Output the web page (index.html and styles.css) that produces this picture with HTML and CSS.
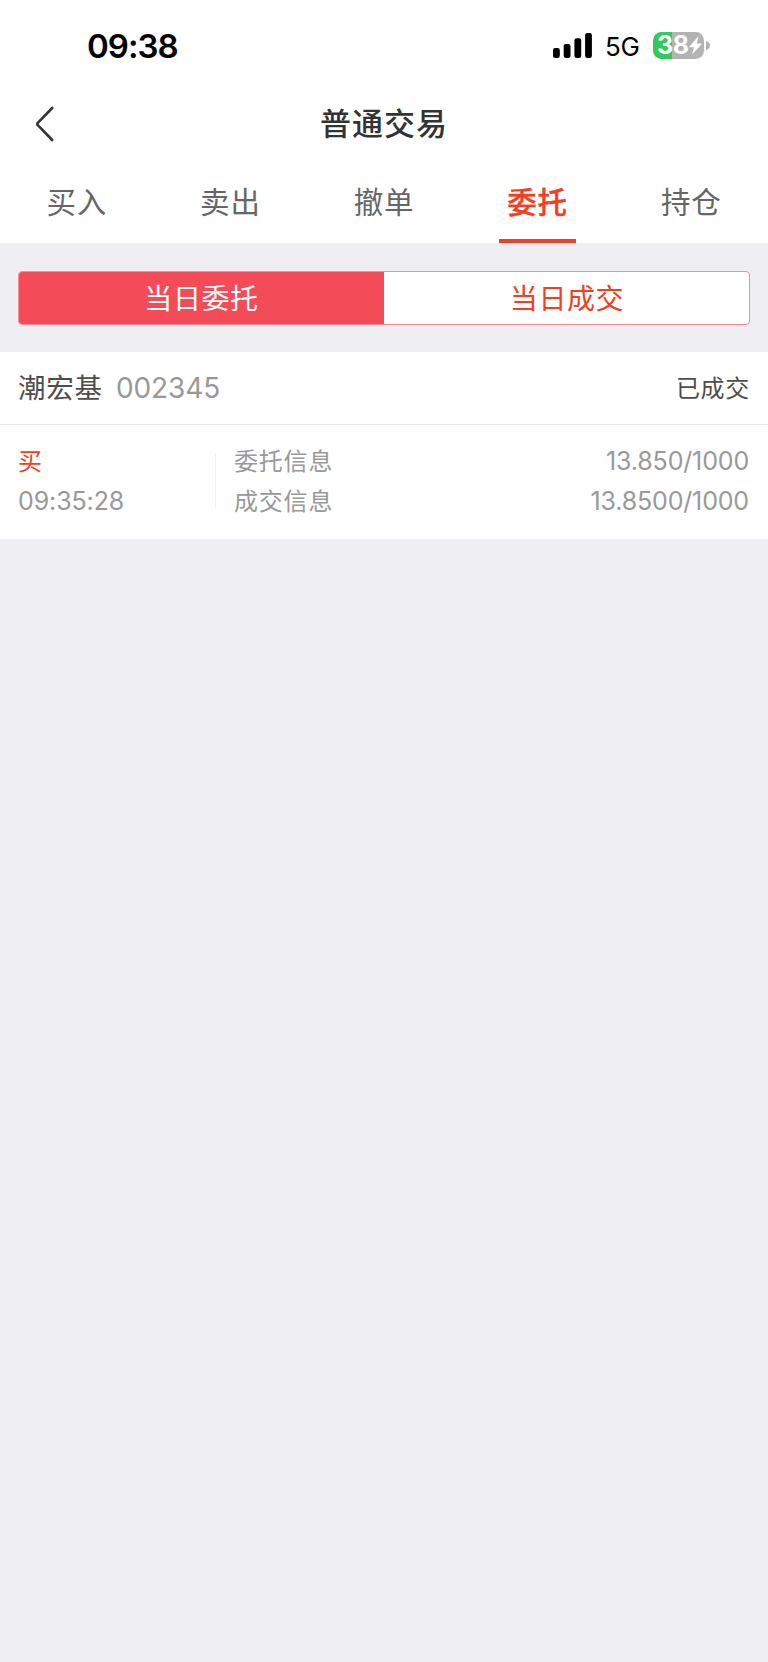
FILE: index.html
```
<!DOCTYPE html>
<html lang="zh-CN">
<head>
<meta charset="utf-8">
<title>普通交易</title>
<link rel="stylesheet" href="styles.css">
</head>
<body>
<header class="top">
  <div class="status">
    <span class="clock">09:38</span>
    <div class="indicators">
      <svg class="signal" width="39" height="25" viewBox="0 0 39 25"><rect x="0" y="15" width="6.8" height="10" rx="2.2"/><rect x="10.7" y="11" width="6.8" height="14" rx="2.2"/><rect x="21.4" y="5.3" width="6.8" height="19.7" rx="2.2"/><rect x="32.1" y="0" width="6.8" height="25" rx="2.2"/></svg>
      <span class="network">5G</span>
      <div class="battery">
        <div class="cell"><span class="level">38</span><svg class="bolt" width="13" height="19" viewBox="0 0 13 19"><path d="M9.6 0 .6 10.4q-.5.8.4.8h4L3.1 18.6 12.4 8.4q.5-.8-.4-.8H7.8z"/></svg></div>
        <svg class="cap" width="4" height="9" viewBox="0 0 4 9"><path d="M0 0q4 1.2 4 4.5T0 9z"/></svg>
      </div>
    </div>
  </div>
  <div class="titlebar">
    <svg class="back" width="20" height="36" viewBox="0 0 20 36"><path d="M16.2 2 1.8 16.8q-1.2 1.2 0 2.4L16.2 34"/></svg>
    <h1 class="title">普通交易</h1>
    <span></span>
  </div>
  <nav class="tabs">
    <span class="tab">买入</span>
    <span class="tab">卖出</span>
    <span class="tab">撤单</span>
    <span class="tab active">委托</span>
    <span class="tab">持仓</span>
  </nav>
</header>
<main>
  <div class="segments">
    <span class="segment selected">当日委托</span>
    <span class="segment">当日成交</span>
  </div>
  <section class="order">
    <div class="order-head">
      <span class="name">潮宏基</span>
      <span class="code">002345</span>
      <span class="state">已成交</span>
    </div>
    <div class="order-body">
      <div class="side">
        <span class="buy">买</span>
        <span class="time num">09:35:28</span>
      </div>
      <div class="info">
        <div class="row"><span class="label">委托信息</span><span class="num">13.850/1000</span></div>
        <div class="row"><span class="label">成交信息</span><span class="num">13.8500/1000</span></div>
      </div>
    </div>
  </section>
</main>
</body>
</html>
```
FILE: styles.css
```
* { box-sizing: border-box; }
body {
  margin: 0;
  min-height: 1662px;
  background: #efeef3;
  font-family: Inter, "Noto Sans CJK SC", sans-serif;
}
svg { display: block; flex: none; }
.top { background: #fff; height: 243px; }
.status {
  height: 91px;
  padding: 0 58px 0 87px;
  display: flex;
  justify-content: space-between;
  align-items: center;
}
.clock { font-size: 33px; font-weight: 600; line-height: 40px; letter-spacing: -1px; color: #000; padding-top: 1px; }
.indicators { display: flex; align-items: center; }
.signal { fill: #000; }
.network { margin-left: 13px; width: 35px; font-size: 26px; line-height: 32px; font-weight: 400; color: #000; padding-top: 3px; letter-spacing: -0.3px; }
.battery { margin-left: 13px; display: flex; align-items: center; gap: 2px; }
.cell {
  width: 51px;
  height: 27px;
  border-radius: 8.5px;
  background: linear-gradient(to right, #34c759 19.5px, #b3b3b3 19.5px);
  display: flex;
  align-items: center;
  padding-left: 4px;
  color: #fff;
}
.level { width: 32px; font-size: 25px; font-weight: 700; line-height: 27px; letter-spacing: -0.4px; }
.bolt { fill: #fff; }
.cap { fill: #b3b3b3; }
.titlebar {
  height: 65px;
  padding: 0 36px;
  display: grid;
  grid-template-columns: 1fr auto 1fr;
  align-items: center;
}
.back { fill: none; stroke: #333; stroke-width: 2.6; stroke-linecap: round; }
.title { margin: 0; font-size: 31px; font-weight: 500; line-height: 40px; letter-spacing: 1px; color: #333; }
.tabs { height: 87px; display: grid; grid-template-columns: repeat(5, 1fr); }
.tab {
  justify-self: center;
  width: 77px;
  padding-top: 24px;
  text-align: center;
  white-space: nowrap;
  font-size: 29.5px;
  line-height: 44px;
  letter-spacing: 0.8px;
  color: #666;
}
.tab.active { color: #f04024; font-weight: 500; -webkit-text-stroke: 0.4px #f04024; border-bottom: 4px solid #e94225; }
.segments {
  margin: 28px 18px 27px;
  height: 54px;
  display: grid;
  grid-template-columns: 1fr 1fr;
  border: 1px solid #f88b93;
  border-radius: 4px;
  overflow: hidden;
  background: #fff;
}
.segment { text-align: center; font-size: 28px; line-height: 54px; letter-spacing: 0.6px; color: #f04024; padding-left: 1px; }
.segment.selected { margin: -1px 0 -1px -1px; line-height: 56px; color: #fff; background: #f34b58; }
.order { background: #fff; height: 187px; color: #999; }
.order-head {
  height: 73px;
  padding: 0 19px 0 18px;
  display: flex;
  align-items: center;
  border-bottom: 1px solid #e9e9eb;
}
.name { font-size: 27.5px; letter-spacing: 0.8px; color: #4d4d4d; padding-bottom: 4px; }
.code { margin-left: 13px; font-size: 28px; letter-spacing: -0.1px; }
.state { margin-left: auto; font-size: 24px; letter-spacing: 0.7px; color: #4d4d4d; margin-right: -1px; padding-bottom: 4px; }
.order-body { height: 114px; padding: 17px 19px 0 18px; display: flex; font-size: 24px; line-height: 40px; }
.side { width: 197px; display: flex; flex-direction: column; }
.buy { color: #f04024; }
.num { font-size: 25px; line-height: 39px; letter-spacing: -0.15px; }
.time { letter-spacing: -0.1px; }
.info {
  flex: 1;
  padding-left: 19px;
  background: linear-gradient(#f2f2f4, #f2f2f4) 0 12px / 1px 54px no-repeat;
}
.row { height: 40px; display: flex; justify-content: space-between; }
.label { letter-spacing: 0.8px; }
```
